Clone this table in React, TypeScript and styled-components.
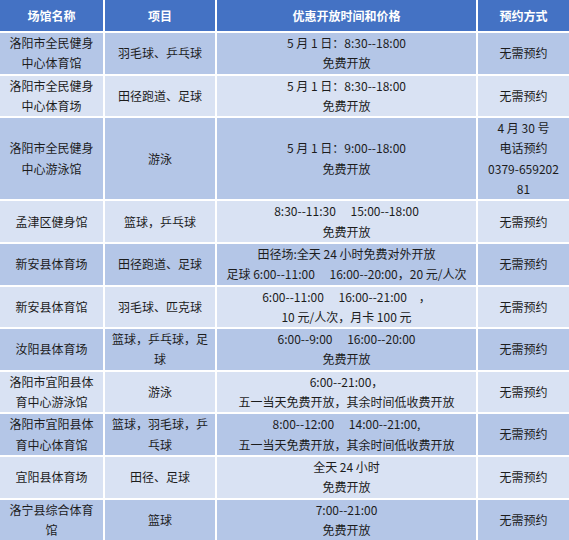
import React from "react";
import styled, { createGlobalStyle } from "styled-components";

const GlobalStyle = createGlobalStyle`
  html, body {
    margin: 0;
    padding: 0;
    background: #ffffff;
  }
  body {
    font-family: "Noto Sans CJK SC", "Noto Sans", sans-serif;
  }
`;

const Table = styled.table`
  width: 569px;
  table-layout: fixed;
  border-collapse: collapse;
  border-style: hidden;
  font-size: 12px;
  color: #1c1c1c;
`;

const Col = styled.col<{ $w: number }>`
  width: ${(p) => p.$w}px;
`;

const HeadCell = styled.th`
  height: 31px;
  padding: 0;
  background: #4472c4;
  color: #ffffff;
  font-weight: 700;
  text-align: center;
  border: 2px solid #ffffff;
`;

const Cell = styled.td<{ $dark: boolean }>`
  padding: 0;
  line-height: 20.3px;
  text-align: center;
  vertical-align: middle;
  white-space: nowrap;
  background: ${(p) => (p.$dark ? "#b4c6e7" : "#d9e2f3")};
  border: 2px solid #ffffff;
`;

type Row = [string[], string[], string[], string[]];

const widths = [104, 112, 261, 92];
const heads = ["场馆名称", "项目", "优惠开放时间和价格", "预约方式"];

const rows: Row[] = [
  [["洛阳市全民健身", "中心体育馆"], ["羽毛球、乒乓球"], ["5 月 1 日：8:30--18:00", "免费开放"], ["无需预约"]],
  [["洛阳市全民健身", "中心体育场"], ["田径跑道、足球"], ["5 月 1 日：8:30--18:00", "免费开放"], ["无需预约"]],
  [
    ["洛阳市全民健身", "中心游泳馆"],
    ["游泳"],
    ["5 月 1 日：9:00--18:00", "免费开放"],
    ["4 月 30 号", "电话预约", "0379-659202", "81"],
  ],
  [["孟津区健身馆"], ["篮球，乒乓球"], ["8:30--11:30\u3000 15:00--18:00", "免费开放"], ["无需预约"]],
  [
    ["新安县体育场"],
    ["田径跑道、足球"],
    ["田径场:全天 24 小时免费对外开放", "足球 6:00--11:00\u3000 16:00--20:00，20 元/人次"],
    ["无需预约"],
  ],
  [["新安县体育馆"], ["羽毛球、匹克球"], ["6:00--11:00\u3000 16:00--21:00\u3000，", "10 元/人次，月卡 100 元"], ["无需预约"]],
  [["汝阳县体育场"], ["篮球，乒乓球，足", "球"], ["6:00--9:00\u3000 16:00--20:00", "免费开放"], ["无需预约"]],
  [["洛阳市宜阳县体", "育中心游泳馆"], ["游泳"], ["6:00--21:00，", "五一当天免费开放，其余时间低收费开放"], ["无需预约"]],
  [
    ["洛阳市宜阳县体", "育中心体育馆"],
    ["篮球，羽毛球，乒", "乓球"],
    ["8:00--12:00\u3000 14:00--21:00,", "五一当天免费开放，其余时间低收费开放"],
    ["无需预约"],
  ],
  [["宜阳县体育场"], ["田径、足球"], ["全天 24 小时", "免费开放"], ["无需预约"]],
  [["洛宁县综合体育", "馆"], ["篮球"], ["7:00--21:00", "免费开放"], ["无需预约"]],
];

const Lines: React.FC<{ lines: string[] }> = ({ lines }) => (
  <>
    {lines.map((line, i) => (
      <React.Fragment key={i}>
        {i > 0 && <br />}
        {line}
      </React.Fragment>
    ))}
  </>
);

export default function App() {
  return (
    <>
      <GlobalStyle />
      <Table>
        <colgroup>
          {widths.map((w, i) => (
            <Col key={i} $w={w} />
          ))}
        </colgroup>
        <thead>
          <tr>
            {heads.map((h) => (
              <HeadCell key={h}>{h}</HeadCell>
            ))}
          </tr>
        </thead>
        <tbody>
          {rows.map((row, r) => (
            <tr key={r}>
              {row.map((lines, c) => (
                <Cell key={c} $dark={r % 2 === 0}>
                  <Lines lines={lines} />
                </Cell>
              ))}
            </tr>
          ))}
        </tbody>
      </Table>
    </>
  );
}
